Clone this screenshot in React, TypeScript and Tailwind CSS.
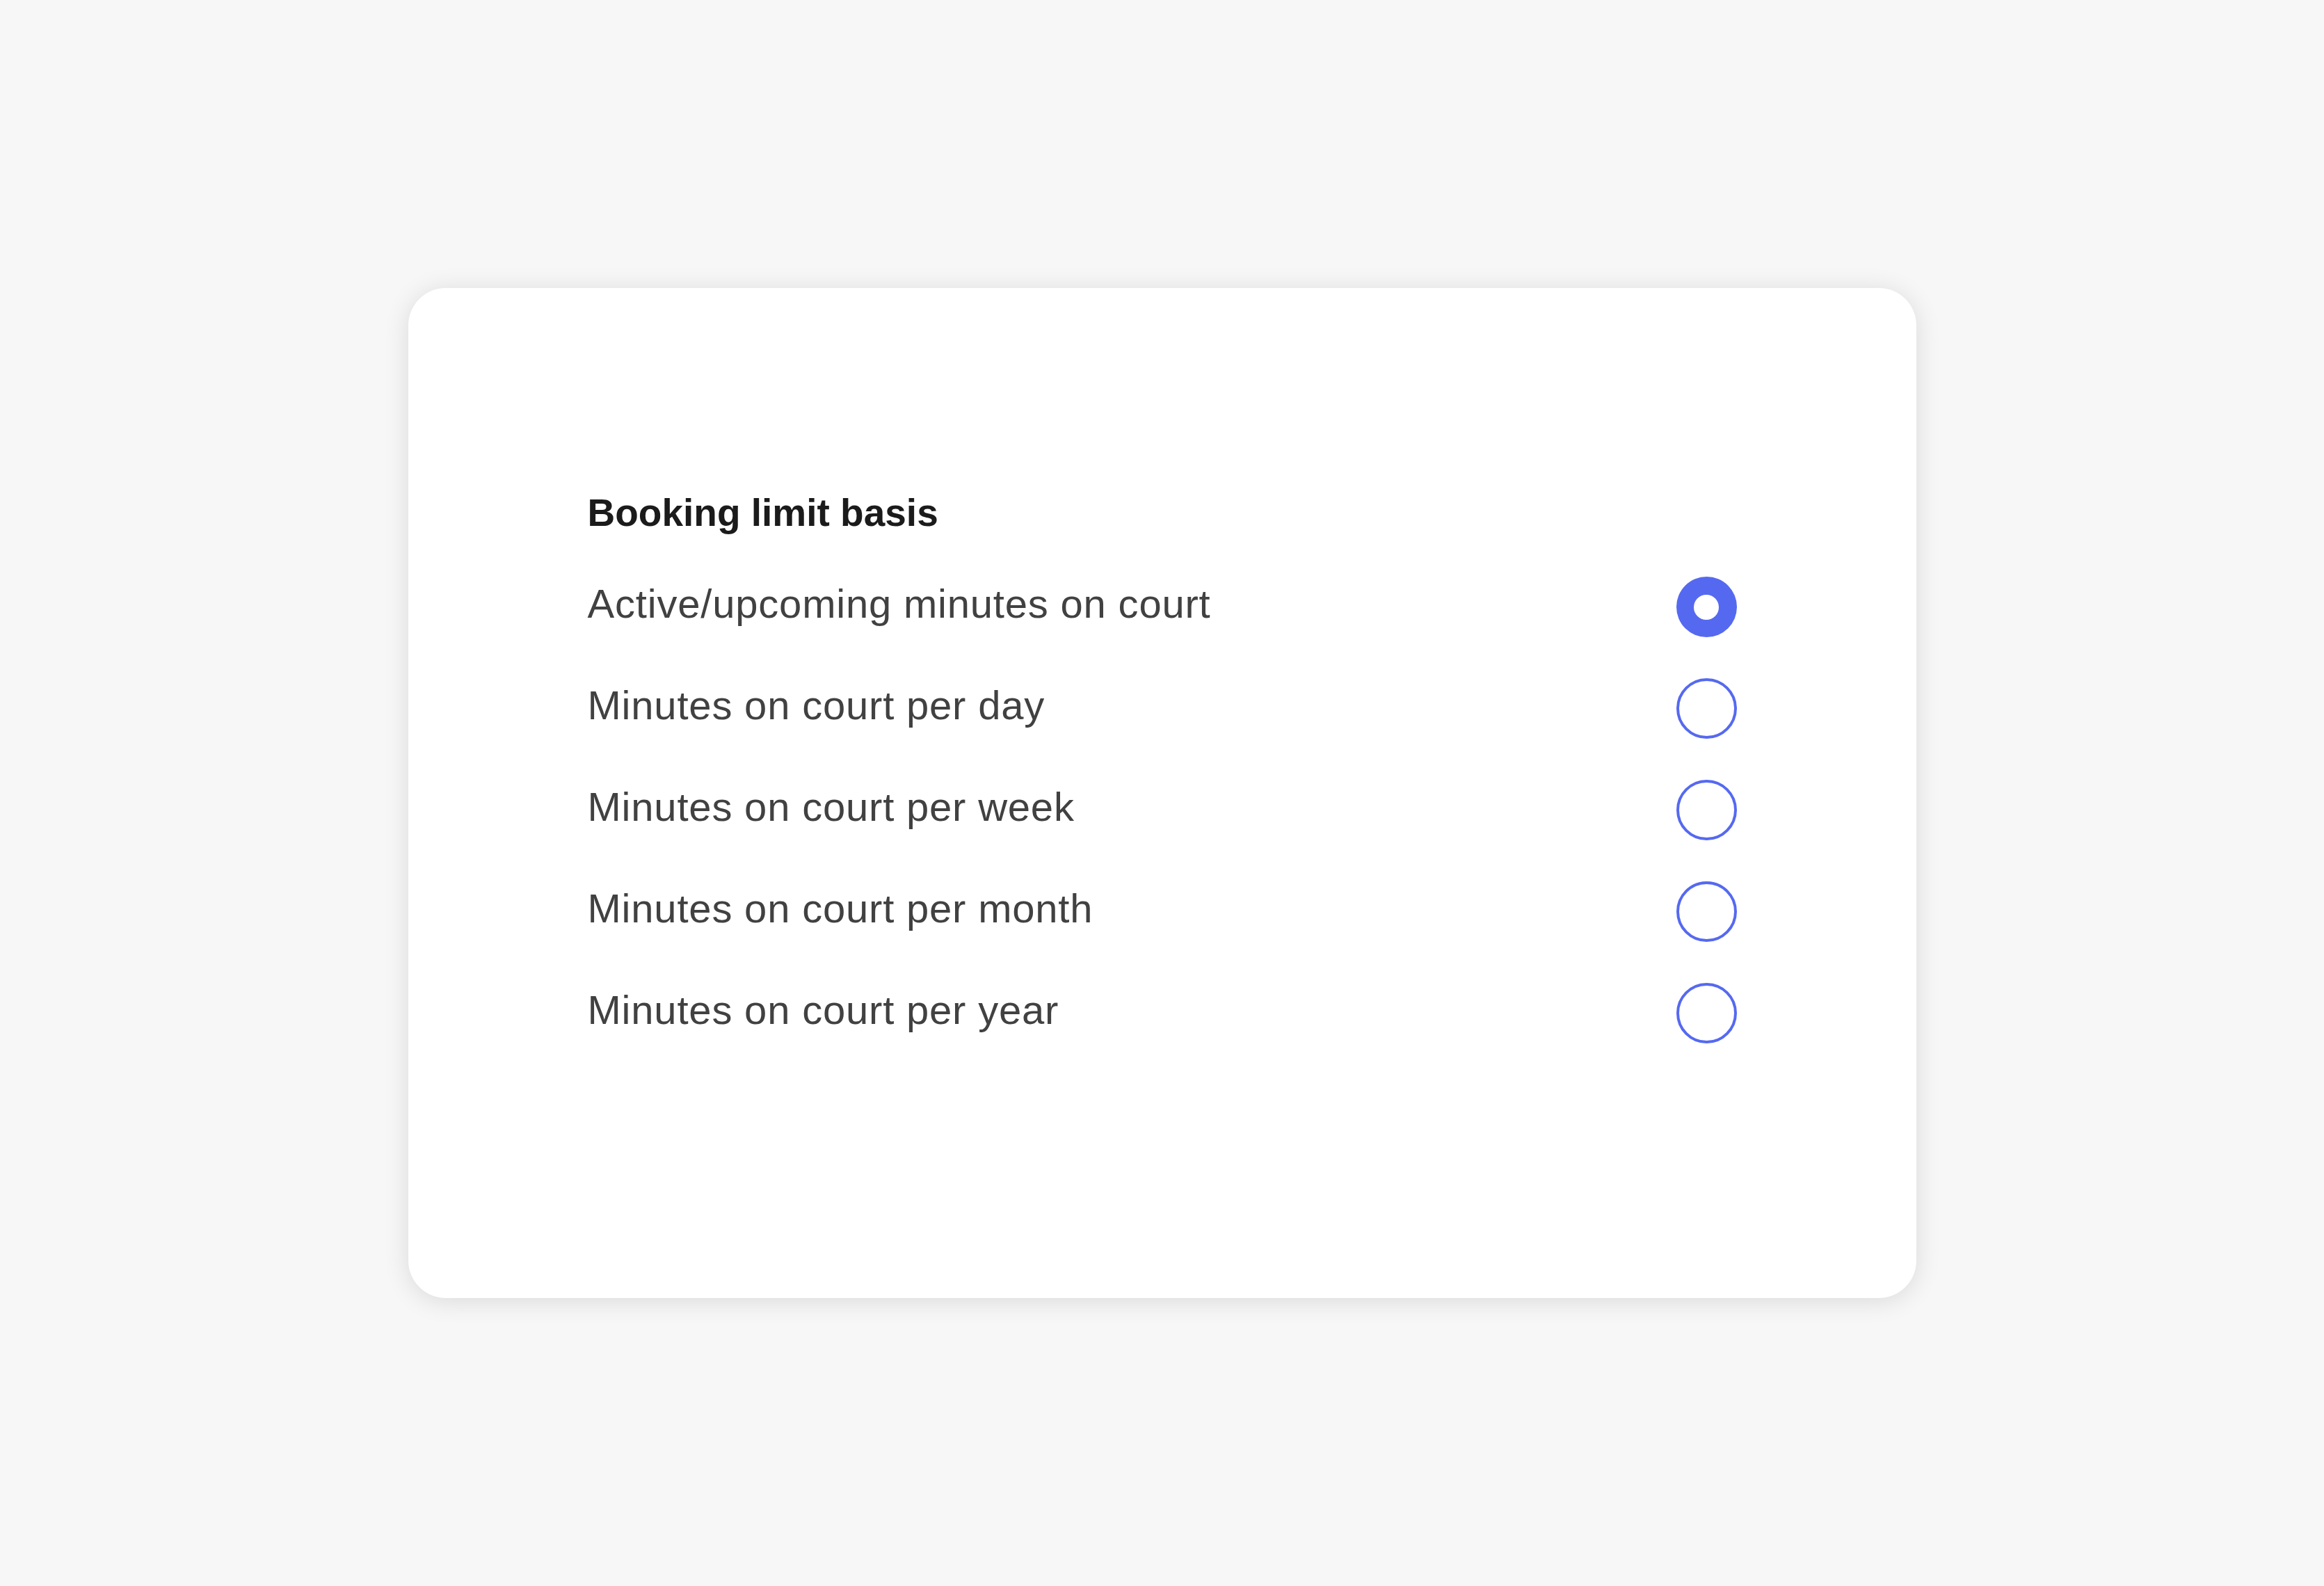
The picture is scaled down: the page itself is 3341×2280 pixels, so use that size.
import { useState } from "react";

const options = [
  "Active/upcoming minutes on court",
  "Minutes on court per day",
  "Minutes on court per week",
  "Minutes on court per month",
  "Minutes on court per year",
];

export default function App() {
  const [selected, setSelected] = useState(0);

  return (
    <main
      className="min-h-screen w-full flex items-center justify-center bg-[#f7f7f7]"
      style={{ fontFamily: '"Liberation Sans", Arial, sans-serif' }}
    >
      <div className="w-[2168px] h-[1452px] rounded-[54px] bg-white shadow-[0_4px_36px_rgba(0,0,0,0.12)] pt-[291px] px-[258px]">
        <h2 className="text-[55px] leading-[64px] font-bold text-[#1b1b1b]">Booking limit basis</h2>

        <div className="mt-[60px] flex flex-col gap-[59px]">
          {options.map((label, i) => (
            <RadioRow key={label} label={label} checked={selected === i} onSelect={() => setSelected(i)} />
          ))}
        </div>
      </div>
    </main>
  );
}

function RadioRow({ label, checked, onSelect }: { label: string; checked: boolean; onSelect: () => void }) {
  return (
    <label className="h-[87px] flex items-center justify-between cursor-pointer" onClick={onSelect}>
      <span className="text-[58px] leading-[64px] tracking-[0.8px] text-[#414141] mb-[10px]">{label}</span>
      {checked ? (
        <span className="w-[87px] h-[87px] rounded-full bg-[#5569f0] flex items-center justify-center">
          <span className="w-[36px] h-[36px] rounded-full bg-white"></span>
        </span>
      ) : (
        <span className="w-[87px] h-[87px] rounded-full border-4 border-[#5569f0] bg-white"></span>
      )}
    </label>
  );
}
